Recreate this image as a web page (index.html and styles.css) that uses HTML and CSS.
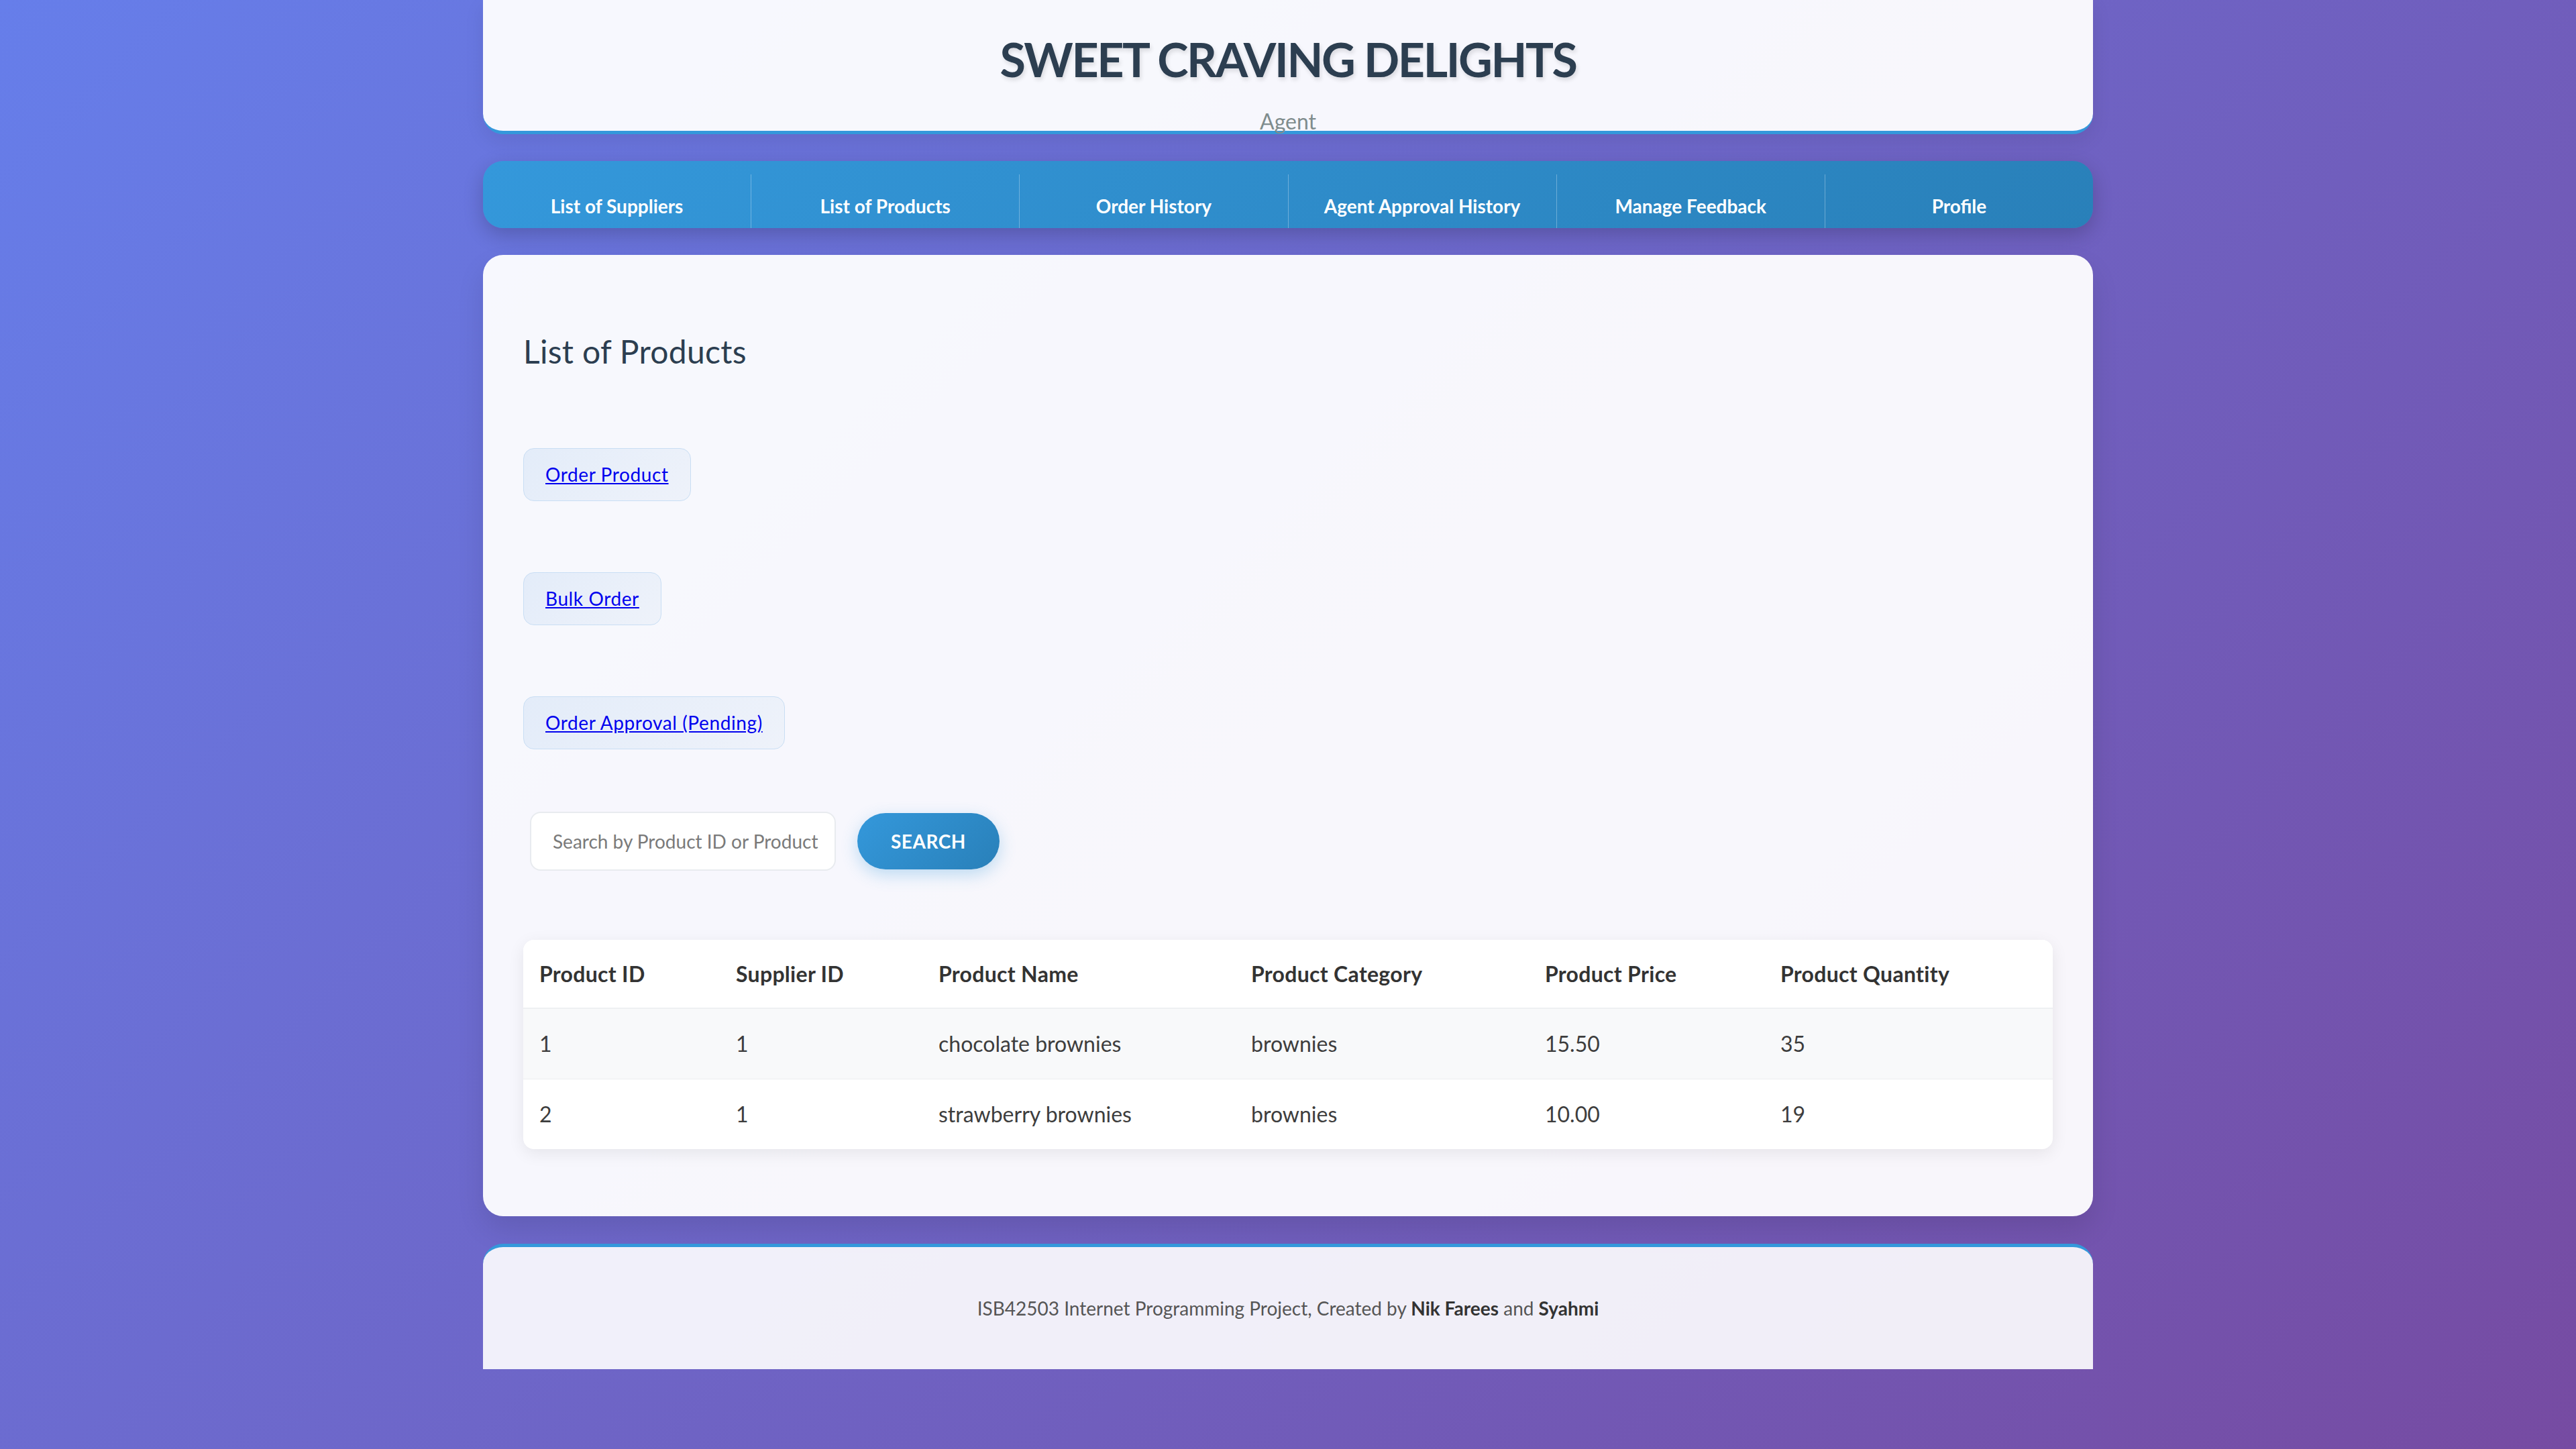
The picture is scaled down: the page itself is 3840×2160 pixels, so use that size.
FILE: index.html
```html
<!DOCTYPE html>
<html lang="en">
<head>
<meta charset="utf-8">
<title>Sweet Craving Delights - List of Products</title>
<link rel="stylesheet" href="styles.css">
</head>
<body>
<div class="page">
  <header class="site-header">
    <h1 class="site-title">SWEET CRAVING DELIGHTS</h1>
    <p class="site-role">Agent</p>
  </header>

  <nav class="nav">
    <a class="nav-item" href="#">List of Suppliers</a>
    <a class="nav-item" href="#">List of Products</a>
    <a class="nav-item" href="#">Order History</a>
    <a class="nav-item" href="#">Agent Approval History</a>
    <a class="nav-item" href="#">Manage Feedback</a>
    <a class="nav-item" href="#">Profile</a>
  </nav>

  <main class="card">
    <h2 class="card-title">List of Products</h2>

    <div class="actions">
      <div class="action"><a href="#">Order Product</a></div>
      <div class="action"><a href="#">Bulk Order</a></div>
      <div class="action"><a href="#">Order Approval (Pending)</a></div>
    </div>

    <form class="search">
      <input class="search-input" type="text" placeholder="Search by Product ID or Product Name">
      <button class="search-btn" type="button">Search</button>
    </form>

    <div class="table-wrap">
      <table class="products">
        <thead>
          <tr>
            <th>Product ID</th>
            <th>Supplier ID</th>
            <th>Product Name</th>
            <th>Product Category</th>
            <th>Product Price</th>
            <th>Product Quantity</th>
          </tr>
        </thead>
        <tbody>
          <tr>
            <td>1</td>
            <td>1</td>
            <td>chocolate brownies</td>
            <td>brownies</td>
            <td>15.50</td>
            <td>35</td>
          </tr>
          <tr>
            <td>2</td>
            <td>1</td>
            <td>strawberry brownies</td>
            <td>brownies</td>
            <td>10.00</td>
            <td>19</td>
          </tr>
        </tbody>
      </table>
    </div>
  </main>

  <footer class="site-footer">
    <p>ISB42503 Internet Programming Project, Created by <strong>Nik Farees</strong> and <strong>Syahmi</strong></p>
  </footer>
</div>
</body>
</html>
```

FILE: styles.css
```css
html {
  min-height: 100%;
  background: linear-gradient(135deg, #667eea 0%, #764ba2 100%);
}

body {
  margin: 0;
  font-family: Lato, "Noto Sans", sans-serif;
  color: #333;
}

.page {
  width: 2400px;
  margin: 0 auto;
  padding-bottom: 117px;
}

/* Header */
.site-header {
  box-sizing: border-box;
  height: 200px;
  padding-top: 46px;
  text-align: center;
  background: rgba(255, 255, 255, 0.95);
  border-bottom: 5px solid #3498db;
  border-radius: 0 0 30px 30px;
  box-shadow: 0 10px 30px rgba(0, 0, 0, 0.08);
}

.site-title {
  margin: 0;
  font-size: 70px;
  line-height: 84px;
  font-weight: 700;
  letter-spacing: -2.4px;
  color: #2c3e50;
  text-shadow: 2px 4px 6px rgba(0, 0, 0, 0.12);
}

.site-role {
  margin: 31px 0 0;
  font-size: 32px;
  line-height: 40px;
  color: #7f8c8d;
}

/* Nav */
.nav {
  display: flex;
  margin-top: 40px;
  height: 100px;
  box-sizing: border-box;
  padding-top: 20px;
  border-radius: 30px;
  overflow: hidden;
  background: linear-gradient(135deg, #3498db 0%, #2980b9 100%);
  box-shadow: 0 10px 30px rgba(0, 0, 0, 0.2);
}

.nav-item {
  flex: 1;
  padding: 27px 0 13px;
  font-size: 28px;
  line-height: 40px;
  font-weight: 700;
  color: #fff;
  text-align: center;
  text-decoration: none;
  border-left: 1px solid rgba(255, 255, 255, 0.3);
}

.nav-item:first-child {
  border-left: none;
}

/* Main card */
.card {
  display: block;
  margin-top: 40px;
  padding: 60px;
  background: rgba(255, 255, 255, 0.95);
  border-radius: 30px;
  box-shadow: 0 20px 40px rgba(0, 0, 0, 0.1);
}

.card-title {
  margin: 55px 0 0;
  font-size: 48px;
  line-height: 58px;
  font-weight: 400;
  letter-spacing: 0.3px;
  color: #2c3e50;
}

.actions {
  display: flex;
  flex-direction: column;
  align-items: flex-start;
  gap: 106px;
  margin-top: 115px;
}

.action {
  padding: 19px 32px;
  font-size: 28px;
  line-height: 39px;
  background: linear-gradient(135deg, #e3ecf9 0%, #eef2fa 100%);
  border: 1px solid #c9def4;
  border-radius: 16px;
}

.action a {
  color: #0000ee;
  text-decoration: underline;
  letter-spacing: 0.6px;
}

/* Search */
.search {
  display: flex;
  align-items: center;
  margin: 93px 0 0;
}

.search-input {
  box-sizing: border-box;
  width: 456px;
  height: 88px;
  margin-left: 10px;
  padding: 0 18px 0 32px;
  font-family: inherit;
  font-size: 28px;
  color: #333;
  background: #fff;
  border: 2px solid #e8ebef;
  border-radius: 16px;
  outline: none;
}

.search-input::placeholder {
  color: #7a7a7a;
}

.search-btn {
  height: 84px;
  margin-left: 32px;
  padding: 0 50px;
  font-family: inherit;
  font-size: 28px;
  font-weight: 700;
  letter-spacing: 0.5px;
  text-transform: uppercase;
  color: #fff;
  background: linear-gradient(135deg, #3498db 0%, #2980b9 100%);
  border: none;
  border-radius: 50px;
  box-shadow: 0 8px 25px rgba(52, 152, 219, 0.3);
}

/* Table */
.table-wrap {
  margin: 103px 0 40px;
  background: #fff;
  border-radius: 16px;
  overflow: hidden;
  box-shadow: 0 6px 24px rgba(0, 0, 0, 0.08);
}

.products {
  width: 100%;
  table-layout: fixed;
  border-collapse: separate;
  border-spacing: 0;
  font-size: 32px;
  line-height: 42px;
}

.products th,
.products td {
  padding: 31px 24px;
  text-align: left;
}

.products th {
  padding: 30px 24px 29px;
  font-weight: 700;
  letter-spacing: 0.3px;
  color: #333;
  background: #fff;
  border-bottom: 2px solid #eef0f2;
}

.products td {
  color: #3d3d3d;
}

.products tbody tr:nth-child(odd) td {
  background: #f8f9fa;
  border-bottom: 1px solid #eceef0;
}

.products th:nth-child(1) { width: 245px; }
.products th:nth-child(2) { width: 254px; }
.products th:nth-child(3) { width: 418px; }
.products th:nth-child(4) { width: 390px; }
.products th:nth-child(5) { width: 303px; }

/* Footer */
.site-footer {
  margin-top: 41px;
  padding: 71px 0 71px;
  text-align: center;
  background: rgba(255, 255, 255, 0.9);
  border-top: 5px solid #3498db;
  border-radius: 30px 30px 0 0;
}

.site-footer p {
  margin: 0;
  font-size: 28px;
  line-height: 40px;
  color: #555;
}

.site-footer strong {
  color: #333;
}
```
